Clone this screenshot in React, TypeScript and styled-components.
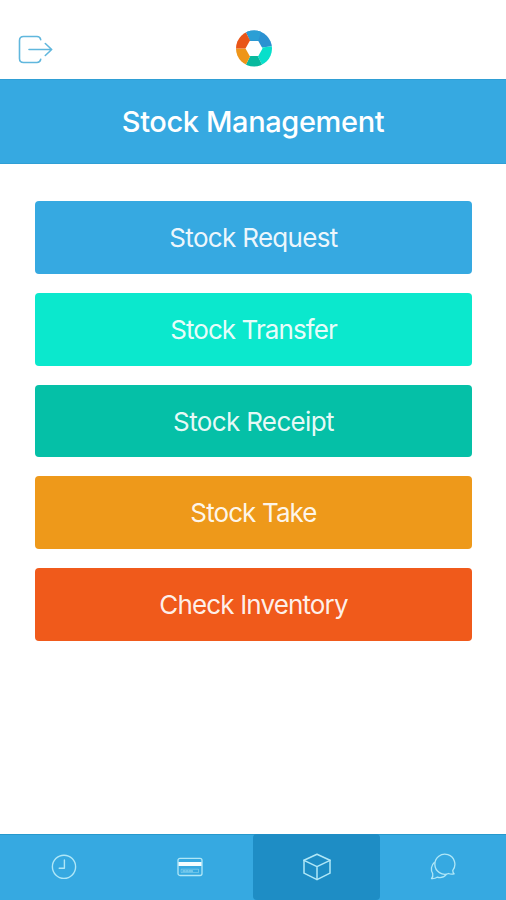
import React from 'react';
import styled, { createGlobalStyle } from 'styled-components';

const GlobalStyle = createGlobalStyle`
  * { box-sizing: border-box; }
  body { margin: 0; background: #fff; }
  button { border: 0; padding: 0; font: inherit; cursor: pointer; }
`;

const Screen = styled.div`
  width: 100%;
  max-width: 506px;
  height: 900px;
  display: flex;
  flex-direction: column;
  background: #fff;
  font-family: Inter, 'Liberation Sans', sans-serif;
  overflow: hidden;
`;

const Header = styled.header`
  height: 79px;
  flex: none;
  display: grid;
  grid-template-columns: 1fr 38px 1fr;
  align-items: center;
  padding: 18px 16.5px 0 17.5px;
`;

const IconButton = styled.button`
  display: flex;
  width: 36px;
  height: 30px;
  margin-top: 3px;
  background: none;
  color: #60b7dd;
`;

const TitleBar = styled.div`
  height: 85px;
  flex: none;
  display: flex;
  align-items: center;
  justify-content: center;
  background: #36a9e1;
  border-top: 1px solid #2f9fd5;
  border-bottom: 1px solid #2f9fd5;
`;

const Title = styled.h1`
  margin: 1px 0 0;
  color: #fff;
  font-size: 29px;
  font-weight: 500;
  line-height: 34px;
  letter-spacing: -0.38px;
  white-space: nowrap;
`;

const Menu = styled.main`
  flex: 1;
  display: flex;
  flex-direction: column;
  gap: 19px;
  padding: 37.3px 34px 0 35px;
`;

const MenuButton = styled.button<{ $color: string; $spacing: number }>`
  height: 72.7px;
  flex: none;
  padding-top: 1px;
  border-radius: 4px;
  background: ${(p) => p.$color};
  color: rgba(255, 255, 255, 0.92);
  font-size: 26px;
  line-height: 30px;
  letter-spacing: ${(p) => p.$spacing}px;
  white-space: nowrap;
`;

const TabBar = styled.nav`
  height: 66px;
  flex: none;
  display: grid;
  grid-template-columns: repeat(4, 1fr);
  background: #36a9e1;
  box-shadow: inset 0 1px 0 #2699cd;
`;

const Tab = styled.button<{ $active?: boolean }>`
  display: flex;
  align-items: center;
  justify-content: center;
  padding-left: 1px;
  border-radius: 4px;
  background: ${(p) => (p.$active ? '#1e8dc5' : 'transparent')};
  color: #b0e7f7;
`;

const Glyph = styled.svg`
  display: block;
  fill: none;
  stroke: currentColor;
  stroke-linecap: round;
  stroke-linejoin: round;
`;

const LogoutIcon = () => (
  <Glyph width="36" height="30" viewBox="0 0 36 30" strokeWidth="1.6">
    <path d="M22.7 4.6C22.2 2.2 21.2 1.5 19 1.5H5.5Q1.5 1.5 1.5 5.5v18q0 4 4 4H19c2.2 0 3.2-.7 3.7-3.1" />
    <path d="M11 14.5h22.7M27.3 8.5 33.7 14.5l-6.4 6" />
  </Glyph>
);

const Logo = () => (
  <svg width="38" height="38" viewBox="-19 -18.5 38 38">
    <defs>
      <clipPath id="logo-disc">
        <circle r="18" />
      </clipPath>
    </defs>
    <g clipPath="url(#logo-disc)">
      <path d="M0 0-12-24H24V-3Z" fill="#2b91d1" />
      <path d="M-4.4-8-8-20H8L4.4-8Z" fill="#2b9fd5" />
      <path d="M0 0 24-3V24H12Z" fill="#08dfcb" />
      <path d="M0 0 12 24H-12Z" fill="#08b99e" />
      <path d="M0 0-12 24H-24V0Z" fill="#ee9519" />
      <path d="M0 0H-24V-24H-12Z" fill="#e95518" />
    </g>
    <path d="M-8.5 0-4.3-7.6H4.3L8.5 0 4.3 7.6H-4.3Z" fill="#fff" />
  </svg>
);

const ClockIcon = () => (
  <Glyph width="26" height="26" viewBox="0 0 26 26" strokeWidth="1.4">
    <circle cx="13" cy="12.8" r="11.6" />
    <path d="M13.4 6v8.2H8.2" />
  </Glyph>
);

const CardIcon = () => (
  <Glyph width="26" height="20" viewBox="0 0 26 20" strokeWidth="1.3">
    <rect x="1" y="1.3" width="24" height="17.2" rx="2" />
    <path d="M1.5 7h23" stroke="#f5fdff" strokeWidth="4" strokeLinecap="butt" />
    <path d="M4.5 12.2h17v3.4h-17z" strokeWidth=".7" opacity=".65" />
    <path d="M6 14h2.2m1.2 0H11m1.2 0h3.3" strokeWidth="1.2" />
  </Glyph>
);

const BoxIcon = () => (
  <Glyph width="28" height="28" viewBox="0 0 28 28" strokeWidth="1.5">
    <path d="M14 1.2 27 7.3v12.9L14 26.6 1 20.2V7.3Z" />
    <path d="m1 7.3 13 6.4 13-6.4M14 13.7v12.9" />
  </Glyph>
);

const ChatIcon = () => (
  <Glyph width="28" height="28" viewBox="0 0 28 28" strokeWidth="1.3">
    <path d="M23.8 17.3a10 10 0 1 0-4.2 3.2c1.7.8 3.5.9 5.5.3-1-.8-1.4-2-1.3-3.5Z" />
    <path d="M5.3 9.6A8.4 8.4 0 0 0 3.7 20.5c.4 2.1 0 3.9-1.2 5 2.4.2 4.1-.2 5.6-1.3 3.3 1 6.8.1 9.1-2.6" />
  </Glyph>
);

const actions = [
  { label: 'Stock Request', color: '#36a9e1', spacing: -0.68 },
  { label: 'Stock Transfer', color: '#0be8cd', spacing: -0.92 },
  { label: 'Stock Receipt', color: '#05c0a7', spacing: -0.65 },
  { label: 'Stock Take', color: '#ee991a', spacing: -0.9 },
  { label: 'Check Inventory', color: '#f05a1b', spacing: -0.85 },
];

export default function App() {
  return (
    <>
      <GlobalStyle />
      <Screen>
        <Header>
          <IconButton aria-label="Log out">
            <LogoutIcon />
          </IconButton>
          <Logo />
        </Header>
        <TitleBar>
          <Title>Stock Management</Title>
        </TitleBar>
        <Menu>
          {actions.map((a) => (
            <MenuButton key={a.label} $color={a.color} $spacing={a.spacing}>
              {a.label}
            </MenuButton>
          ))}
        </Menu>
        <TabBar>
          <Tab aria-label="History">
            <ClockIcon />
          </Tab>
          <Tab aria-label="Payments">
            <CardIcon />
          </Tab>
          <Tab aria-label="Stock" $active>
            <BoxIcon />
          </Tab>
          <Tab aria-label="Messages">
            <ChatIcon />
          </Tab>
        </TabBar>
      </Screen>
    </>
  );
}
